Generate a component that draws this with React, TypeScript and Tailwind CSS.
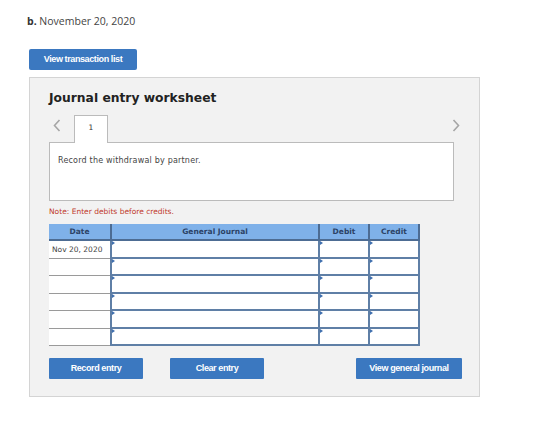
const rows = ["Nov 20, 2020", "", "", "", "", ""];

function Marker() {
  return (
    <span className="absolute left-0 top-0 w-0 h-0 border-t-[2.5px] border-b-[2.5px] border-l-[3px] border-t-transparent border-b-transparent border-l-[#3f6fae]" />
  );
}

function Chevron({ dir }: { dir: "left" | "right" }) {
  return (
    <svg width="8" height="13" viewBox="0 0 8 13" className="absolute top-[4px]" style={dir === "left" ? { left: 4 } : { right: 0 }}>
      <path
        d={dir === "left" ? "M6.5 1 L1.5 6.5 L6.5 12" : "M1.5 1 L6.5 6.5 L1.5 12"}
        fill="none"
        stroke="#a6a6a6"
        strokeWidth="1.6"
      />
    </svg>
  );
}

export default function App() {
  return (
    <div className="w-[560px] h-[433px] bg-white font-['Open_Sans',sans-serif] text-[#333]">
      <div className="pl-[27px] pt-[14px] text-[10.5px] leading-[14px] text-[#444]">
        <span className="font-bold text-[#333]">b.</span> November 20, 2020
      </div>

      <button className="ml-[29px] mt-[21px] w-[108px] h-[21px] rounded-[2px] bg-[#3b78c0] text-white text-[9px] font-bold tracking-[-0.4px] font-['Liberation_Sans',sans-serif] block">
        View transaction list
      </button>

      <div className="ml-[29px] mt-[7px] w-[451px] h-[320px] bg-[#f2f2f2] border border-[#d4d4d4] pl-[19px] font-['DejaVu_Sans',sans-serif]">
        <div className="pt-[13px] text-[12.3px] leading-[14px] font-bold text-[#222]">
          Journal entry worksheet
        </div>

        {/* tabs */}
        <div className="mt-[10px] flex items-end h-[27px] w-[411px] relative">
          <Chevron dir="left" />
          <div className="ml-[25px] w-[34px] h-[28px] bg-white border border-[#bbb] border-b-0 relative z-10 text-[7.5px] text-center pt-[6px] -mb-px">
            1
          </div>
          <Chevron dir="right" />
        </div>
        <div className="w-[405px] h-[59px] bg-white border border-[#bbb] px-[8px] pt-[12px] text-[8px] tracking-[0.2px] text-[#444]">
          Record the withdrawal by partner.
        </div>

        <div className="mt-[5px] text-[7.5px] text-[#c0392b]">
          Note: Enter debits before credits.
        </div>

        {/* table */}
        <div className="mt-[7px] w-[371px]">
          <div className="flex h-[17px] bg-[#7fb1e9] border-b-2 border-[#4d6c93] text-[7.5px] font-bold text-[#2c4366] items-center">
            <div className="w-[61px] text-center">Date</div>
            <div className="w-[208px] h-full flex items-center justify-center border-l-2 border-[#4d6c93]">
              General Journal
            </div>
            <div className="w-[50px] h-full flex items-center justify-center border-l-2 border-[#4d6c93]">
              Debit
            </div>
            <div className="w-[52px] h-full flex items-center justify-center border-x-2 border-[#4d6c93]">
              Credit
            </div>
          </div>
          {rows.map((d, i) => (
            <div key={i} className="flex h-[17.5px]">
              <div className="w-[61px] h-full bg-white border-b border-[#9a9a9a] text-[7.5px] pl-[3px] flex items-center text-[#444]">
                {d}
              </div>
              <div className="w-[208px] h-full bg-white border-l-2 border-b-2 border-[#5f7fa6] relative">
                <Marker />
              </div>
              <div className="w-[50px] h-full bg-white border-l-2 border-b-2 border-[#5f7fa6] relative">
                <Marker />
              </div>
              <div className="w-[52px] h-full bg-white border-x-2 border-b-2 border-[#5f7fa6] relative">
                <Marker />
              </div>
            </div>
          ))}
        </div>

        {/* buttons */}
        <div className="mt-[12px] flex font-['Liberation_Sans',sans-serif] text-[9px] font-bold text-white tracking-[-0.4px]">
          <button className="w-[94px] h-[21px] bg-[#3b78c0] rounded-[1px]">Record entry</button>
          <button className="ml-[27px] w-[94px] h-[21px] bg-[#3b78c0] rounded-[1px]">Clear entry</button>
          <button className="ml-[92px] w-[106px] h-[21px] bg-[#3b78c0] rounded-[1px]">View general journal</button>
        </div>
      </div>
    </div>
  );
}
